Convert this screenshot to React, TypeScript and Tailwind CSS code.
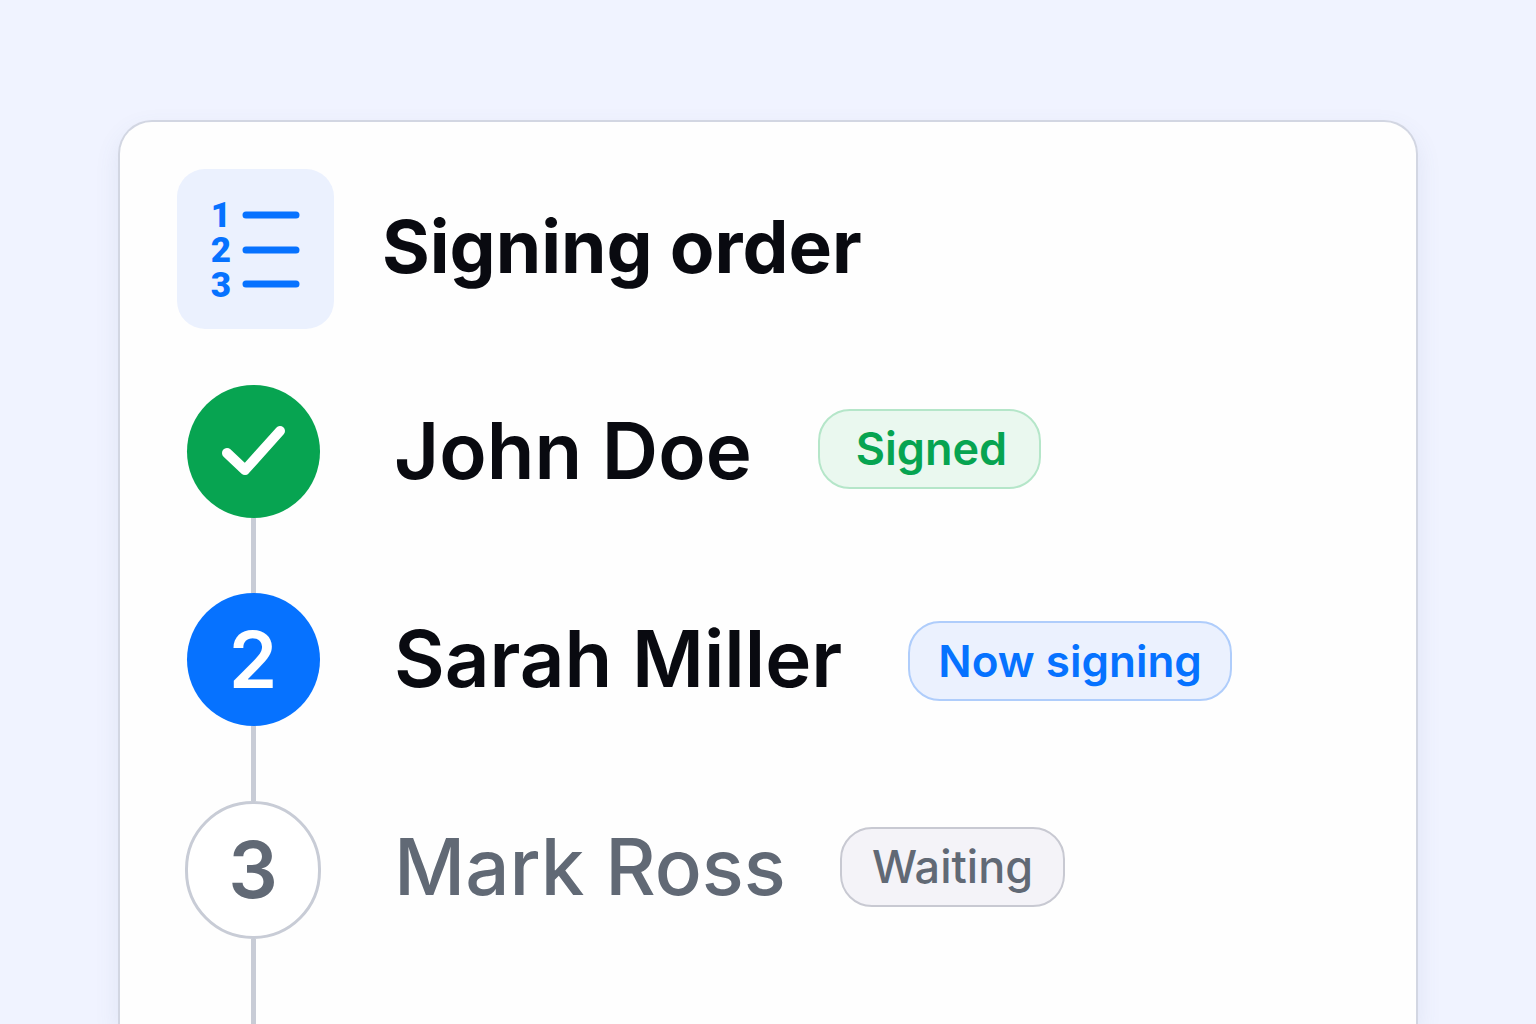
import React from "react";

type StepStatus = "signed" | "current" | "waiting";

interface Signer {
  id: number;
  name: string;
  label: string;
  status: StepStatus;
}

const signers: Signer[] = [
  { id: 1, name: "John Doe", label: "Signed", status: "signed" },
  { id: 2, name: "Sarah Miller", label: "Now signing", status: "current" },
  { id: 3, name: "Mark Ross", label: "Waiting", status: "waiting" },
];

const markerStyles: Record<StepStatus, string> = {
  signed: "w-[133px] h-[133px] bg-[#07a451] text-white",
  current: "w-[133px] h-[133px] bg-[#0672ff] text-white",
  waiting: "w-[136px] h-[138px] border-[3px] border-[#c8ccd6] bg-white text-[#616975]",
};

const nameStyles: Record<StepStatus, string> = {
  signed: "font-semibold text-[#090a10]",
  current: "font-semibold text-[#090a10]",
  waiting: "font-medium text-[#616975]",
};

const badgeStyles: Record<StepStatus, string> = {
  signed:
    "mb-2 ml-[66px] pl-9 pr-8 text-[45px] font-semibold border-[#b5e6c9] bg-[#eaf8ef] text-[#07a451]",
  current:
    "ml-[66px] px-7 text-[44px] font-semibold border-[#afcdfb] bg-[#ebf1fe] text-[#0672ff]",
  waiting:
    "mb-1 ml-[54px] px-[30px] text-[45px] font-medium border-[#c8c9d2] bg-[#f4f3f8] text-[#616975]",
};

function OrderIcon() {
  return (
    <svg className="w-full h-full" viewBox="0 0 157 160" aria-hidden="true">
      <g fill="#0672ff" fontFamily="Roboto, sans-serif" fontSize="35" fontWeight="900" textAnchor="middle">
        <text x="44" y="58">1</text>
        <text x="44" y="93">2</text>
        <text x="44" y="128">3</text>
      </g>
      <path d="M69 46H119M69 81H119M69 115H119" stroke="#0672ff" strokeWidth="7" strokeLinecap="round" />
    </svg>
  );
}

function CheckIcon() {
  return (
    <svg className="w-full h-full" viewBox="0 0 133 133" fill="none" aria-hidden="true">
      <path
        d="M40 68L58 85L93 46"
        stroke="white"
        strokeWidth="10"
        strokeLinecap="round"
        strokeLinejoin="round"
      />
    </svg>
  );
}

export default function App() {
  return (
    <div className="flex min-h-screen bg-[#f0f3ff] px-[118px] pt-[120px] font-['Inter',sans-serif]">
      <main className="flex flex-1 flex-col rounded-t-[34px] border-2 border-b-0 border-[#d2d6e2] bg-[#fefefe] pl-[57px] pt-[47px] shadow-[0_10px_24px_rgba(80,100,150,0.10)]">
        <header className="flex items-center gap-12">
          <div className="w-[157px] h-[160px] shrink-0 rounded-[28px] bg-[#ebf1fe]">
            <OrderIcon />
          </div>
          <h1 className="pb-1 text-[73px] leading-[96px] font-bold text-[#090a10]">Signing order</h1>
        </header>
        <ol className="mt-14 flex flex-1 flex-col pl-2">
          {signers.map((signer) => (
            <li key={signer.id} className="flex gap-[73px] last:flex-1">
              <div className="flex w-[136px] shrink-0 flex-col items-center">
                <div
                  className={`flex shrink-0 items-center justify-center rounded-full text-[78px] leading-none font-semibold ${markerStyles[signer.status]}`}
                >
                  {signer.status === "signed" ? <CheckIcon /> : signer.id}
                </div>
                <div className="min-h-[75px] w-[5px] flex-1 bg-[#c8ccd6]" />
              </div>
              <div className="flex h-[136px] items-center">
                <span className={`pb-1 text-[78px] leading-[100px] whitespace-nowrap ${nameStyles[signer.status]}`}>
                  {signer.name}
                </span>
                <span
                  className={`rounded-[32px] border-2 py-[14px] leading-[48px] whitespace-nowrap ${badgeStyles[signer.status]}`}
                >
                  {signer.label}
                </span>
              </div>
            </li>
          ))}
        </ol>
      </main>
    </div>
  );
}
